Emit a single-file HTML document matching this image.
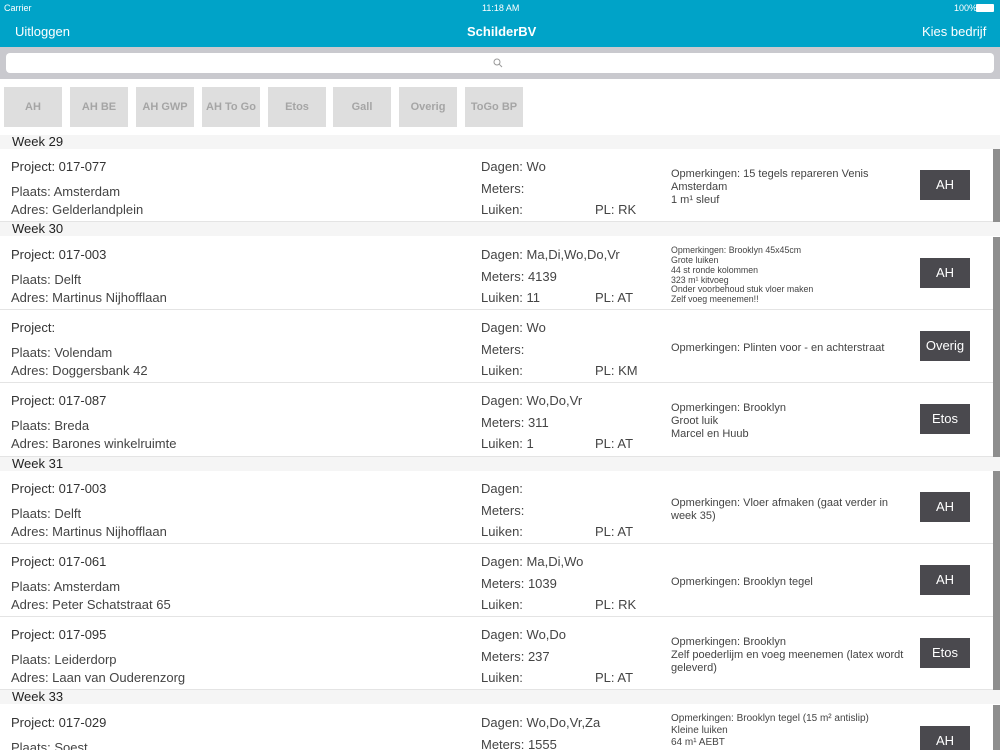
<!DOCTYPE html>
<html style="height:750px;overflow:hidden"><head><meta charset="utf-8">
<style>
*{margin:0;padding:0;box-sizing:border-box}
body{width:1000px;height:750px;overflow:hidden;position:relative;background:#fff;font-family:"Liberation Sans",Arial,sans-serif;color:#444}
.abs{position:absolute}
#top{left:0;top:0;width:1000px;height:47px;background:#00a3c8;color:#fff}
.sb{font-size:9px;top:3px}
.nav{font-size:13px;top:24px}
#search{left:0;top:47px;width:1000px;height:32px;background:#c9c9ce}
#field{left:6px;top:53px;width:988px;height:20px;background:#fff;border-radius:4px}
.f{top:87px;width:58px;height:40px;background:#dedede;color:#a5a5a5;font-size:11px;font-weight:bold;text-align:center;line-height:40px}
.wk{left:0;width:1000px;height:14px;background:#f5f5f5;font-size:13px;color:#222;padding-left:12px;line-height:14px}
.row{left:0;width:1000px;height:73px;border-bottom:1px solid #e4e4e4}
.row .t{position:absolute;font-size:13px;white-space:nowrap}
.p{left:11px;top:10px;color:#333}
.pl{left:11px;top:35px}
.ad{left:11px;top:53px}
.dg{left:481px;top:10px}
.mt{left:481px;top:32px}
.lk{left:481px;top:53px}
.plc{left:595px;top:53px}
.rm{position:absolute;left:671px;top:2px;width:240px;height:73px;display:flex;align-items:center;font-size:11px;line-height:13px;color:#444}
.rm.s{font-size:8.8px;line-height:9.9px}
.btn{position:absolute;left:920px;top:21px;width:50px;height:30px;background:#4a494e;color:#fff;font-size:13px;text-align:center;line-height:30px}
.bar{position:absolute;left:993px;top:0;width:7px;height:73px;background:#8e8e8e}
</style></head><body>
<div id="top" class="abs">
 <div class="abs sb" style="left:4px">Carrier</div>
 <div class="abs sb" style="left:482px">11:18 AM</div>
 <div class="abs sb" style="left:954px">100%</div>
 <div class="abs" style="left:976px;top:4px;width:18px;height:8px;background:#fff;border-radius:1px"></div>
 <div class="abs nav" style="left:15px">Uitloggen</div>
 <div class="abs nav" style="left:467px;font-weight:bold">SchilderBV</div>
 <div class="abs nav" style="left:922px">Kies bedrijf</div>
</div>
<div id="search" class="abs"></div>
<div id="field" class="abs"><svg style="position:absolute;left:487px;top:5px" width="10" height="10" viewBox="0 0 10 10"><circle cx="4" cy="4" r="3" fill="none" stroke="#999" stroke-width="1"/><path d="M6.2 6.2L9 9" stroke="#999" stroke-width="1"/></svg></div>
<div class="abs f" style="left:4px">AH</div>
<div class="abs f" style="left:70px">AH BE</div>
<div class="abs f" style="left:136px">AH GWP</div>
<div class="abs f" style="left:202px">AH To Go</div>
<div class="abs f" style="left:268px">Etos</div>
<div class="abs f" style="left:333px">Gall</div>
<div class="abs f" style="left:399px">Overig</div>
<div class="abs f" style="left:465px">ToGo BP</div>

<div class="abs wk" style="top:135px">Week 29</div>
<div class="abs row" style="top:149px">
 <div class="t p">Project: 017-077</div><div class="t pl">Plaats: Amsterdam</div><div class="t ad">Adres: Gelderlandplein</div>
 <div class="t dg">Dagen: Wo</div><div class="t mt">Meters:</div><div class="t lk">Luiken:</div><div class="t plc">PL: RK</div>
 <div class="rm" style="width:215px"><div>Opmerkingen: 15 tegels repareren Venis Amsterdam<br>1 m¹ sleuf</div></div>
 <div class="btn">AH</div><div class="bar"></div>
</div>
<div class="abs wk" style="top:222px">Week 30</div>
<div class="abs row" style="top:237px">
 <div class="t p">Project: 017-003</div><div class="t pl">Plaats: Delft</div><div class="t ad">Adres: Martinus Nijhofflaan</div>
 <div class="t dg">Dagen: Ma,Di,Wo,Do,Vr</div><div class="t mt">Meters: 4139</div><div class="t lk">Luiken: 11</div><div class="t plc">PL: AT</div>
 <div class="rm s"><div>Opmerkingen: Brooklyn 45x45cm<br>Grote luiken<br>44 st ronde kolommen<br>323 m¹ kitvoeg<br>Onder voorbehoud stuk vloer maken<br>Zelf voeg meenemen!!</div></div>
 <div class="btn">AH</div><div class="bar"></div>
</div>
<div class="abs row" style="top:310px">
 <div class="t p">Project:</div><div class="t pl">Plaats: Volendam</div><div class="t ad">Adres: Doggersbank 42</div>
 <div class="t dg">Dagen: Wo</div><div class="t mt">Meters:</div><div class="t lk">Luiken:</div><div class="t plc">PL: KM</div>
 <div class="rm"><div>Opmerkingen: Plinten voor - en achterstraat</div></div>
 <div class="btn">Overig</div><div class="bar"></div>
</div>
<div class="abs row" style="top:383px;height:74px">
 <div class="t p">Project: 017-087</div><div class="t pl">Plaats: Breda</div><div class="t ad">Adres: Barones winkelruimte</div>
 <div class="t dg">Dagen: Wo,Do,Vr</div><div class="t mt">Meters: 311</div><div class="t lk">Luiken: 1</div><div class="t plc">PL: AT</div>
 <div class="rm"><div>Opmerkingen: Brooklyn<br>Groot luik<br>Marcel en Huub</div></div>
 <div class="btn">Etos</div><div class="bar" style="height:74px"></div>
</div>
<div class="abs wk" style="top:457px">Week 31</div>
<div class="abs row" style="top:471px">
 <div class="t p">Project: 017-003</div><div class="t pl">Plaats: Delft</div><div class="t ad">Adres: Martinus Nijhofflaan</div>
 <div class="t dg">Dagen:</div><div class="t mt">Meters:</div><div class="t lk">Luiken:</div><div class="t plc">PL: AT</div>
 <div class="rm" style="width:225px"><div>Opmerkingen: Vloer afmaken (gaat verder in week 35)</div></div>
 <div class="btn">AH</div><div class="bar"></div>
</div>
<div class="abs row" style="top:544px">
 <div class="t p">Project: 017-061</div><div class="t pl">Plaats: Amsterdam</div><div class="t ad">Adres: Peter Schatstraat 65</div>
 <div class="t dg">Dagen: Ma,Di,Wo</div><div class="t mt">Meters: 1039</div><div class="t lk">Luiken:</div><div class="t plc">PL: RK</div>
 <div class="rm"><div>Opmerkingen: Brooklyn tegel</div></div>
 <div class="btn">AH</div><div class="bar"></div>
</div>
<div class="abs row" style="top:617px">
 <div class="t p">Project: 017-095</div><div class="t pl">Plaats: Leiderdorp</div><div class="t ad">Adres: Laan van Ouderenzorg</div>
 <div class="t dg">Dagen: Wo,Do</div><div class="t mt">Meters: 237</div><div class="t lk">Luiken:</div><div class="t plc">PL: AT</div>
 <div class="rm"><div>Opmerkingen: Brooklyn<br>Zelf poederlijm en voeg meenemen (latex wordt geleverd)</div></div>
 <div class="btn">Etos</div><div class="bar"></div>
</div>
<div class="abs wk" style="top:690px">Week 33</div>
<div class="abs row" style="top:705px">
 <div class="t p">Project: 017-029</div><div class="t pl">Plaats: Soest</div><div class="t ad">Adres:</div>
 <div class="t dg">Dagen: Wo,Do,Vr,Za</div><div class="t mt">Meters: 1555</div>
 <div class="rm" style="align-items:flex-start;top:8px;font-size:10px;line-height:12px"><div>Opmerkingen: Brooklyn tegel (15 m² antislip)<br>Kleine luiken<br>64 m¹ AEBT</div></div>
 <div class="btn">AH</div><div class="bar"></div>
</div>
</body></html>
